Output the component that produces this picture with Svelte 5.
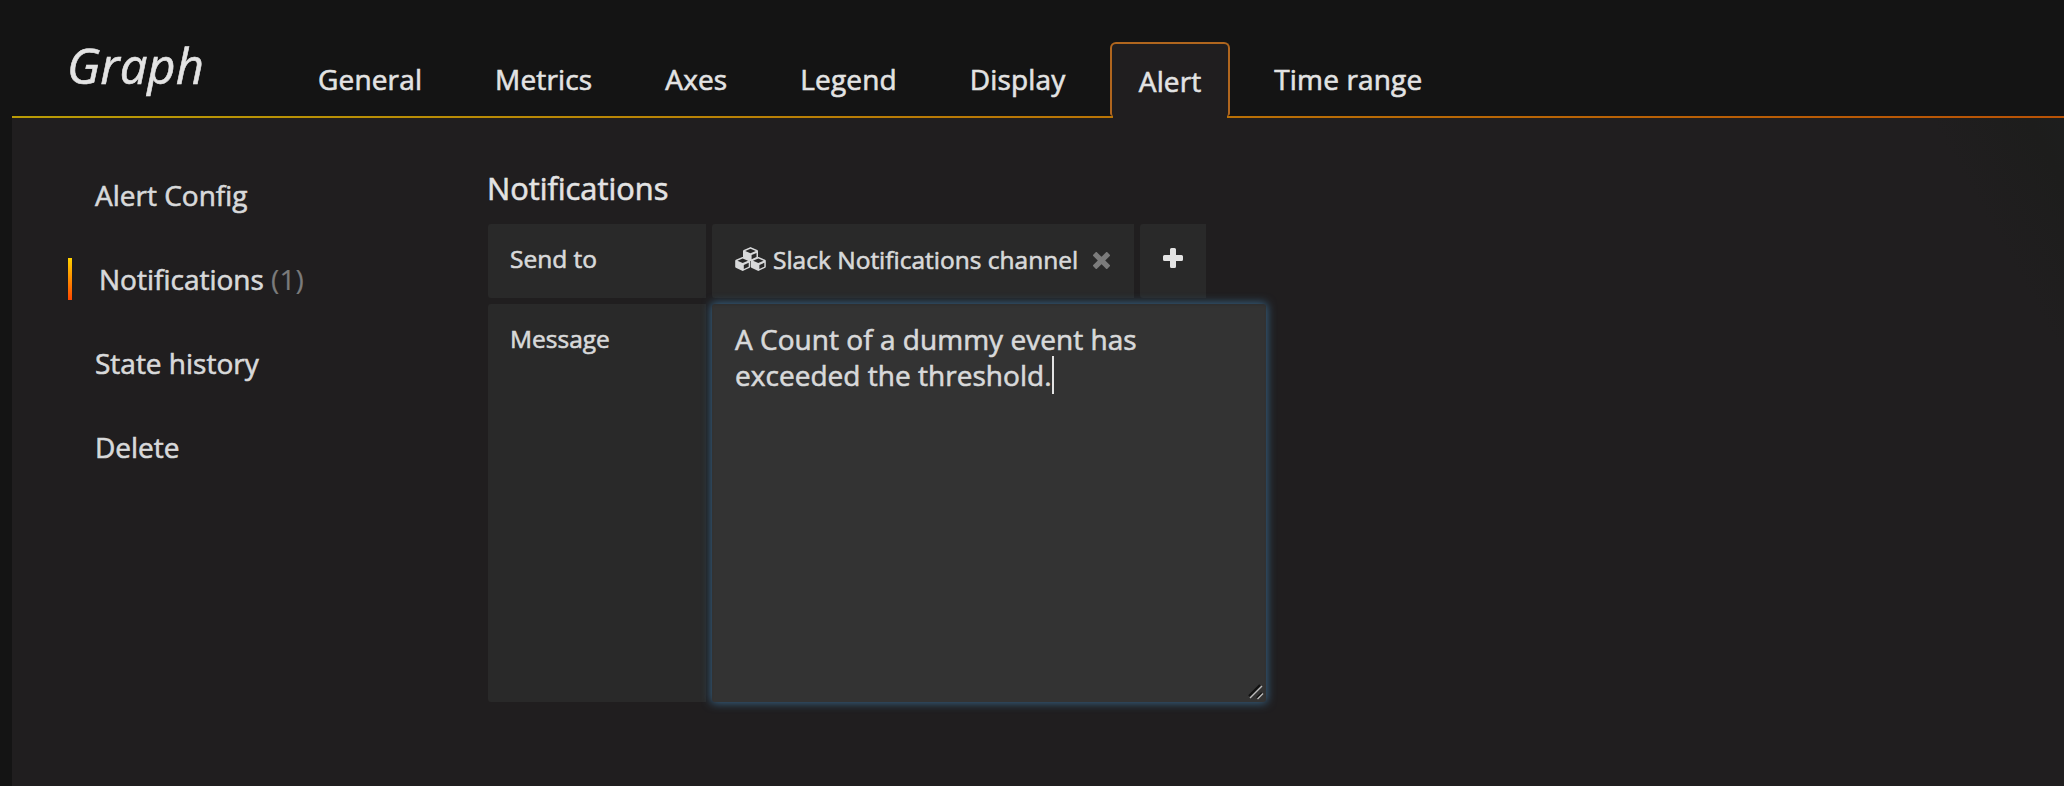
<script>
  const tabs = ['General', 'Metrics', 'Axes', 'Legend', 'Display', 'Alert', 'Time range'];
  const activeTab = 'Alert';
  const sections = [
    { label: 'Alert Config' },
    { label: 'Notifications', count: 1, active: true },
    { label: 'State history' },
    { label: 'Delete' },
  ];
</script>

<div class="editor">
  <header>
    <h1>Graph</h1>
    <nav>
      {#each tabs as tab}
        <a class="tab" class:active={tab === activeTab}>{tab}</a>
      {/each}
    </nav>
  </header>

  <main>
    <aside>
      {#each sections as s}
        <a class="section" class:active={s.active}>{s.label}{#if s.count}<span class="muted">&nbsp;({s.count})</span>{/if}</a>
      {/each}
    </aside>

    <section class="form">
      <h2>Notifications</h2>
      <div class="row">
        <div class="cell label">Send to</div>
        <div class="cell channel">
          <svg class="cubes" viewBox="0 0 31 24" width="31" height="24">
            <defs>
              <g id="cube">
                <path fill="#d8d9da" d="M7.6 .2 Q8 0 8.4 .2 L14.8 2.9 Q15.5 3.2 15.5 4 V10 Q15.5 10.700 14.900 11 L8.500 14 Q8 14.200 7.500 14 L1.100 11 Q.5 10.700 .5 10 V4 Q.5 3.200 1.200 2.900Z" />
                <path fill="#282828" d="M8 1.700 L13.300 3.900 L8 6.200 L2.700 3.900Z M9.100 8.100 L14 6 V9.900 L9.100 12.200Z" />
              </g>
            </defs>
            <use href="#cube" x="7.500" y="0" />
            <use href="#cube" x="-.3" y="9.800" />
            <use href="#cube" x="15.300" y="9.800" />
          </svg>
          <span>Slack Notifications channel</span>
          <svg class="remove" viewBox="0 0 17 17" width="17" height="17">
            <path d="M3.300 3.300 L13.700 13.700 M13.700 3.300 L3.300 13.700" stroke="#7b7b7b" stroke-width="5.200" stroke-linecap="square" stroke-linejoin="round" />
          </svg>
        </div>
        <div class="cell add">
          <svg viewBox="0 0 20 20" width="20" height="20">
            <path fill="#e3e3e3" d="M8.500 0h3q1.500 0 1.500 1.500V7h5.500Q20 7 20 8.500v3q0 1.500-1.500 1.500H13v5.500q0 1.500-1.500 1.500h-3Q7 20 7 18.500V13H1.500Q0 13 0 11.500v-3Q0 7 1.500 7H7V1.500Q7 0 8.500 0Z" />
          </svg>
        </div>
      </div>
      <div class="row message">
        <div class="cell label">Message</div>
        <div class="textarea">
          A Count of a dummy event has exceeded the threshold.<span class="caret"></span>
          <svg class="grip" viewBox="0 0 16 16" width="16" height="16">
            <path d="M1 12 L12 1 M9 14 L14 9" stroke="#111" stroke-width="2.200" />
            <path d="M2 14 L14 2 M9.500 15 L15 9.500" stroke="#bbb" stroke-width="1.400" />
          </svg>
        </div>
      </div>
    </section>
  </main>
</div>

<style>
  :global(body) {
    background: #141414;
  }
  .editor {
    box-sizing: border-box;
    height: 786px;
    padding-left: 12px;
    display: flex;
    flex-direction: column;
    overflow: hidden;
    font: 28px/42px 'Open Sans', sans-serif;
    color: #d8d9da;
    -webkit-text-stroke: 0.6px currentColor;
  }
  header {
    box-sizing: border-box;
    height: 118px;
    flex: none;
    display: flex;
    align-items: flex-start;
    border-bottom: 2px solid;
    border-image: linear-gradient(to right, rgba(255, 213, 0, 0.7), rgba(255, 109, 0, 0.7)) 1;
    color: #e3e3e3;
  }
  h1 {
    width: 223px;
    margin: 30px 0 0 55px;
    font-size: 49px;
    line-height: 70px;
    font-weight: 400;
    font-style: italic;
  }
  nav {
    display: flex;
    gap: 17px;
    padding-top: 42px;
    letter-spacing: 0.15px;
  }
  .tab {
    box-sizing: border-box;
    height: 74px;
    padding: 16px 28px 0;
  }
  .tab.active {
    position: relative;
    margin-right: -1px;
    padding: 16px 26.8px 0 26.4px;
    border: 2px solid #b0661e;
    border-bottom: 0;
    border-radius: 6px 6px 3px 3px;
    background: #201e1f;
  }
  .tab.active::after {
    content: '';
    position: absolute;
    left: 1px;
    right: 1px;
    bottom: -2px;
    height: 3px;
    background: #201e1f;
  }
  main {
    flex: 1;
    display: flex;
    background: linear-gradient(61deg, #201e1f 94.5%, #1d1d1c 98.5%, #1d1e1e 100%);
  }
  aside {
    box-sizing: border-box;
    width: 420px;
    padding: 56px 0 0 56px;
    display: flex;
    flex-direction: column;
    gap: 42px;
  }
  .section {
    padding-left: 27px;
  }
  .section.active {
    border-left: 4px solid;
    border-image: linear-gradient(#ffd500, #ff4400) 1;
  }
  .muted {
    color: #7b7b7b;
    -webkit-text-stroke-width: 0.2px;
  }
  .form {
    padding: 49px 0 0 56px;
  }
  h2 {
    margin: 0 0 15px -1px;
    font-size: 30.8px;
    line-height: 42px;
    font-weight: 400;
    color: #e3e3e3;
  }
  .row {
    display: flex;
    gap: 6px;
    margin-bottom: 6px;
    font-size: 24.5px;
    line-height: 36px;
  }
  .cell {
    box-sizing: border-box;
    height: 74px;
    background: #292929;
    border-radius: 3px 0 0 3px;
  }
  .label {
    width: 218px;
    padding: 17px 22px;
  }
  .channel {
    width: 422px;
    padding: 18px 0 0 23px;
    display: flex;
    align-items: flex-start;
  }
  .channel span {
    white-space: nowrap;
  }
  .cubes {
    margin: 5px 7px 0 0;
  }
  .remove {
    margin: 10px 0 0 14.5px;
  }
  .add {
    width: 66px;
    padding: 24px 0 0 23px;
  }
  .add svg {
    display: block;
  }
  .message .label {
    height: 398px;
  }
  .textarea {
    position: relative;
    box-sizing: border-box;
    width: 554px;
    height: 398px;
    padding: 17px 50px 0 23px;
    font-size: 28px;
    line-height: 36px;
    letter-spacing: 0.03px;
    background: #333;
    border-radius: 3px;
    box-shadow: inset 0 2px 2px rgba(0, 0, 0, 0.075), 0 0 10px 1px #386587;
  }
  .caret {
    display: inline-block;
    width: 2px;
    height: 38px;
    margin: -8px 0;
    vertical-align: 0;
    background: #e3e3e3;
  }
  .grip {
    position: absolute;
    right: 2px;
    bottom: 2px;
  }
</style>
